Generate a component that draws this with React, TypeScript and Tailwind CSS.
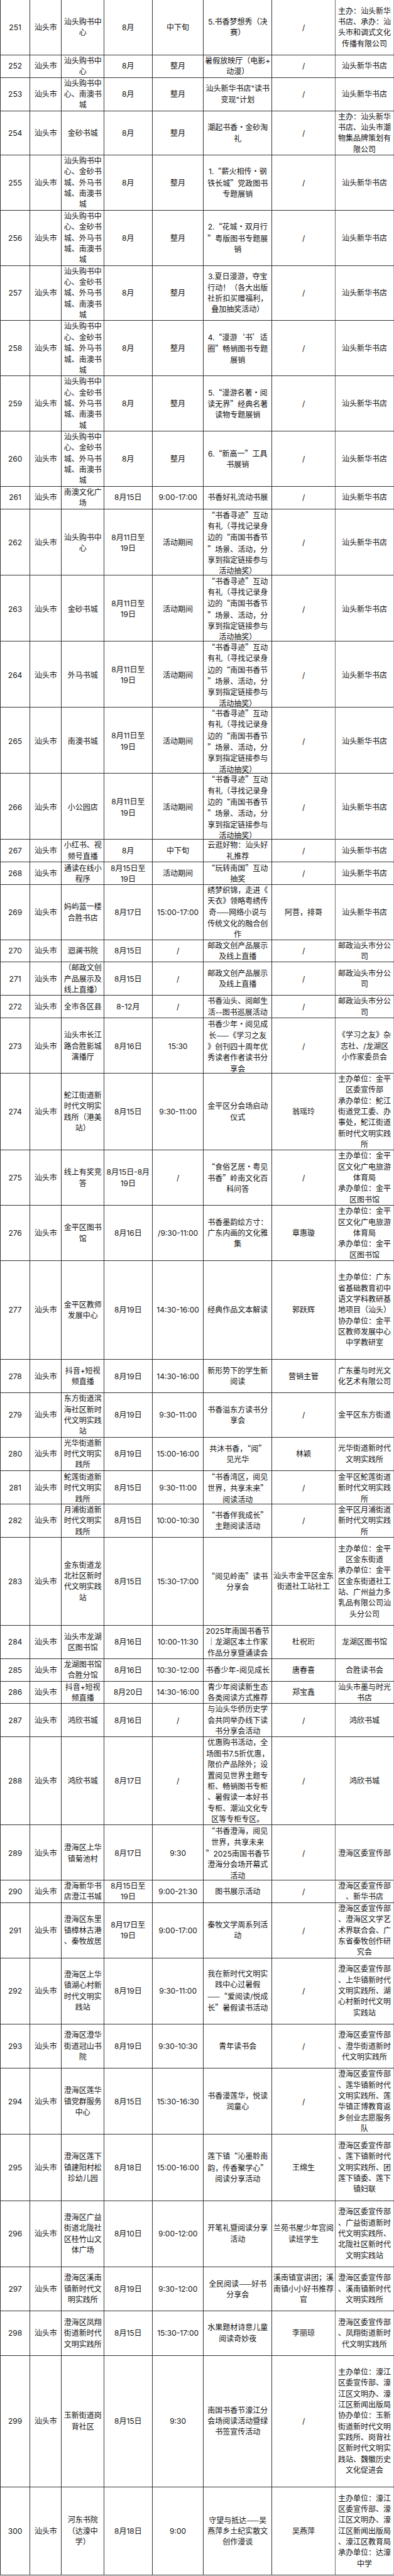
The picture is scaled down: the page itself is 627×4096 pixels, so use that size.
import React from "react";

type Row = [number, number, string, string, string, string, string, string];

const H: Record<number, string> = {
  2: "h-[35.72px]",
  3: "h-[53.08px]",
  4: "h-[70.44px]",
  5: "h-[87.8px]",
  6: "h-[105.16px]",
  7: "h-[122.52px]",
  8: "h-[139.88px]",
  9: "h-[157.24px]",
  12: "h-[209.32px]",
};

const V5 = "汕头购书中|心、金砂书|城、外马书|城、南澳书|城";
const XF = "汕头新华书店";
const HUD = "“书香寻迹”互动|有礼（寻找记录身|边的“南国书香节|”场景、活动，分|享到指定链接参与|活动抽奖）";
const YZ = "邮政汕头市分公|司";
const JP = "主办单位：金平|区文化广电旅游|体育局|承办单位：金平|区图书馆";

const rows: Row[] = [
  [251, 5, "汕头购书中|心", "8月", "中下旬", "5.书香梦想秀（决|赛）", "/", "主办：汕头新华|书店、承办：汕|头市和调式文化|传播有限公司"],
  [252, 2, "汕头购书中|心", "8月", "整月", "暑假放映厅（电影+|动漫）", "/", XF],
  [253, 3, "汕头购书中|心、南澳书|城", "8月", "整月", "汕头新华书店\"读书|变现\"计划", "/", XF],
  [254, 4, "金砂书城", "8月", "整月", "潮起书香·金砂淘|礼", "/", "主办：汕头新华|书店、汕头市潮|物集品牌策划有|限公司"],
  [255, 5, V5, "8月", "整月", "1.“薪火相传·钢|铁长城”党政图书|专题展销", "/", XF],
  [256, 5, V5, "8月", "整月", "2.“花城·双月行|”粤版图书专题展|销", "/", XF],
  [257, 5, V5, "8月", "整月", "3.夏日漫游，夺宝|行动！（各大出版|社折扣买赠福利，|叠加抽奖活动）", "/", XF],
  [258, 5, V5, "8月", "整月", "4.“漫游‘书’适|圈”畅销图书专题|展销", "/", XF],
  [259, 5, V5, "8月", "整月", "5.“漫游名著·阅|读无界”经典名著|读物专题展销", "/", XF],
  [260, 5, V5, "8月", "整月", "6.“新高一”工具|书展销", "/", XF],
  [261, 2, "南澳文化广|场", "8月15日", "9:00-17:00", "书香好礼流动书展", "/", XF],
  [262, 6, "汕头购书中|心", "8月11日至|19日", "活动期间", HUD, "/", XF],
  [263, 6, "金砂书城", "8月11日至|19日", "活动期间", HUD, "/", XF],
  [264, 6, "外马书城", "8月11日至|19日", "活动期间", HUD, "/", XF],
  [265, 6, "南澳书城", "8月11日至|19日", "活动期间", HUD, "/", XF],
  [266, 6, "小公园店", "8月11日至|19日", "活动期间", HUD, "/", XF],
  [267, 2, "小红书、视|频号直播", "8月", "中下旬", "云逛好物：汕头好|礼推荐", "/", XF],
  [268, 2, "通读在线小|程序", "8月15日至|19日", "活动期间", "“玩转南国”互动|抽奖", "/", XF],
  [269, 5, "妈屿蓝一楼|合胜书店", "8月17日", "15:00-17:00", "绣梦织锦，走进《|天衣》领略粤绣传|奇——网络小说与|传统文化的融合创|作", "阿菩，排哥", XF],
  [270, 2, "迴澜书院", "8月15日", "/", "邮政文创产品展示|及线上直播", "/", YZ],
  [271, 3, "（邮政文创|产品展示及|线上直播）", "8月15日", "/", "邮政文创产品展示|及线上直播", "/", YZ],
  [272, 2, "全市各区县", "8-12月", "/", "书香汕头、阅邮生|活--图书巡展活动", "/", YZ],
  [273, 5, "汕头市长江|路合胜影城|演播厅", "8月16日", "15:30", "书香少年·阅见成|长——《学习之友|》创刊四十周年优|秀读者作者读书分|享会", "/", "《学习之友》杂|志社、/龙湖区|小作家委员会"],
  [274, 7, "鮀江街道新|时代文明实|践所（港美|站）", "8月15日", "9:30-11:00", "金平区分会场启动|仪式", "翁瑶玲", "主办单位：金平|区委宣传部|承办单位：鮀江|街道党工委、办|事处，鮀江街道|新时代文明实践|所"],
  [275, 5, "线上有奖竞|答", "8月15日-8月|19日", "/", "“食俗艺居·粤见|书香”岭南文化百|科问答", "/", JP],
  [276, 5, "金平区图书|馆", "8月16日", "/9:30-11:00", "书香墨韵绘方寸：|广东内画的文化雅|集", "章惠璇", JP],
  [277, 9, "金平区教师|发展中心", "8月19日", "14:30-16:00", "经典作品文本解读", "郭跃辉", "主办单位：广东|省基础教育初中|语文学科教研基|地项目（汕头）|协办单位：金平|区教师发展中心|中学教研室"],
  [278, 3, "抖音+短视|频直播", "8月19日", "14:30-16:00", "新形势下的学生新|阅读", "营销主管", "广东墨与时光文|化艺术有限公司"],
  [279, 4, "东方街道滨|海社区新时|代文明实践|站", "8月19日", "9:30-11:00", "书香溢东方读书分|享会", "/", "金平区东方街道"],
  [280, 3, "光华街道新|时代文明实|践所", "8月19日", "15:00-16:00", "共沐书香，“阅”|见光华", "林颖", "光华街道新时代|文明实践所"],
  [281, 3, "鮀莲街道新|时代文明实|践所", "8月15日", "9:30-11:00", "“书香湾区，阅见|世界，共享未来”|阅读活动", "/", "金平区鮀莲街道|新时代文明实践|所"],
  [282, 3, "月浦街道新|时代文明实|践所", "8月15日", "10:00-10:30", "“书香伴我成长”|主题阅读活动", "/", "金平区月浦街道|新时代文明实践|所"],
  [283, 8, "金东街道龙|北社区新时|代文明实践|站", "8月15日", "15:30-17:00", "“阅见岭南”读书|分享会", "汕头市金平区金东|街道社工站社工", "主办单位：金平|区金东街道|承办单位：金平|区金东街道社工|站、广州益力多|乳品有限公司汕|头分公司"],
  [284, 3, "汕头市龙湖|区图书馆", "8月16日", "10:00-11:30", "2025年南国书香节|｜龙湖区本土作家|作品分享暨诵读会", "杜祝珩", "龙湖区图书馆"],
  [285, 2, "龙湖图书馆|合胜分馆", "8月16日", "10:30-12:00", "书香少年-阅见成长", "唐春喜", "合胜读书会"],
  [286, 2, "抖音+短视|频直播", "8月20日", "14:30-16:00", "青少年阅读新生态|各类阅读方式推荐", "郑宝鑫", "汕头市墨与时光|书店"],
  [287, 3, "鸿欣书城", "8月16日", "/", "与汕头华侨历史学|会共同举办线下读|书分享会活动", "/", "鸿欣书城"],
  [288, 8, "鸿欣书城", "8月17日", "/", "优惠购书活动，全|场图书7.5折优惠，|限价产品除外；设|置阅见世界主题专|柜、畅销图书专柜|、暑假读一本好书|专柜、潮汕文化专|区等专柜专区。", "/", "鸿欣书城"],
  [289, 5, "澄海区上华|镇菊池村", "8月17日", "9:30", "“书香澄海，阅见|世界，共享未来|”2025南国书香节|澄海分会场开幕式|活动", "/", "澄海区委宣传部"],
  [290, 2, "澄海新华书|店澄江书城", "8月15日至|19日", "9:00-21:30", "图书展示活动", "/", "澄海区委宣传部|、新华书店"],
  [291, 5, "澄海区东里|镇樟林古港|、秦牧故居", "8月17日至|19日", "9:00-17:00", "秦牧文学周系列活|动", "/", "澄海区委宣传部|、澄海区文学艺|术界联合会、广|东省秦牧创作研|究会"],
  [292, 6, "澄海区上华|镇湖心村新|时代文明实|践站", "8月19日", "9:30-11:00", "我在新时代文明实|践中心过暑假|——“爱阅读/悦成|长”暑假读书活动", "/", "澄海区委宣传部|、上华镇新时代|文明实践所、湖|心村新时代文明|实践站"],
  [293, 4, "澄海区澄华|街道冠山书|院", "8月19日", "9:30-10:30", "青年读书会", "/", "澄海区委宣传部|、澄华街道新时|代文明实践所"],
  [294, 6, "澄海区莲华|镇党群服务|中心", "8月15日", "15:30-16:30", "书香漫莲华，悦读|润童心", "/", "澄海区委宣传部|、莲华镇新时代|文明实践所、莲|华镇正博教育返|乡创业志愿服务|队"],
  [295, 6, "澄海区莲下|镇建阳村松|珍幼儿园", "8月18日", "15:00-16:00", "莲下镇“沁墨聆南|韵，传香聚学心”|阅读分享活动", "王绵生", "澄海区委宣传部|、莲下镇新时代|文明实践所、团|莲下镇委、莲下|镇妇联"],
  [296, 6, "澄海区广益|街道北陇社|区桂竹山文|体广场", "8月10日", "9:00-12:00", "开笔礼暨阅读分享|活动", "兰苑书屋少年宫阅|读班学生", "澄海区委宣传部|、广益街道新时|代文明实践所、|北陇社区新时代|文明实践站"],
  [297, 4, "澄海区溪南|镇新时代文|明实践所", "8月19日", "9:30-12:00", "全民阅读——好书|分享会", "溪南镇宣讲团；溪|南镇小小好书推荐|官", "澄海区委宣传部|、溪南镇新时代|文明实践所"],
  [298, 4, "澄海区凤翔|街道新时代|文明实践所", "8月15日", "15:30-17:00", "水果题材诗意儿童|阅读奇妙夜", "李丽琼", "澄海区委宣传部|、凤翔街道新时|代文明实践所"],
  [299, 12, "玉新街道岗|背社区", "8月15日", "9:30", "南国书香节濠江分|会场阅读活动暨绿|书签宣传活动", "/", "主办单位：濠江|区委宣传部、濠|江区文明办、濠|江区新闻出版局|协办单位：玉新|街道新时代文明|实践所、岗背社|区新时代文明实|践站、魏徽历史|文化促进会"],
  [300, 8, "河东书院|（达濠中|学）", "8月18日", "9:00", "守望与抵达——吴|燕萍乡土纪实散文|创作漫谈", "吴燕萍", "主办单位：濠江|区委宣传部、濠|江区文明办、濠|江区新闻出版局|、濠江区教育局|承办单位：达濠|中学"],
];

function Line({ text }: { text: string }) {
  const parts = text.split(/([“”‘’·—]+)/);
  return (
    <div className="whitespace-nowrap">
      {parts.map((p, i) =>
        /[“”‘’·—]/.test(p) ? (
          <span key={i} className="[font-family:'Noto_Sans_CJK_SC',sans-serif]">
            {p}
          </span>
        ) : (
          <React.Fragment key={i}>{p}</React.Fragment>
        )
      )}
    </div>
  );
}

function Cell({ text, extra = "" }: { text: string; extra?: string }) {
  return (
    <div
      className={
        "flex flex-col items-center justify-center text-center border-r border-[#333333] " + extra
      }
    >
      {text.split("|").map((l, i) => (
        <Line key={i} text={l} />
      ))}
    </div>
  );
}

export default function App() {
  return (
    <div className="w-[627px] bg-white text-[#111111] text-[12px] leading-[17.36px] [font-family:Inter,'Noto_Sans_CJK_SC',sans-serif]">
      {rows.map((r) => (
        <div
          key={r[0]}
          className={
            "grid grid-cols-[48.2px_50.3px_67.3px_77.1px_81.5px_108.7px_101.1px_92.8px] border-b border-[#333333] " +
            H[r[1]]
          }
        >
          <Cell text={String(r[0])} extra="border-l" />
          <Cell text="汕头市" />
          <Cell text={r[2]} />
          <Cell text={r[3]} />
          <Cell text={r[4]} />
          <Cell text={r[5]} />
          <Cell text={r[6]} extra="border-r-[#707070]" />
          <Cell text={r[7]} extra="border-r-[#b0b0b0]" />
        </div>
      ))}
    </div>
  );
}
